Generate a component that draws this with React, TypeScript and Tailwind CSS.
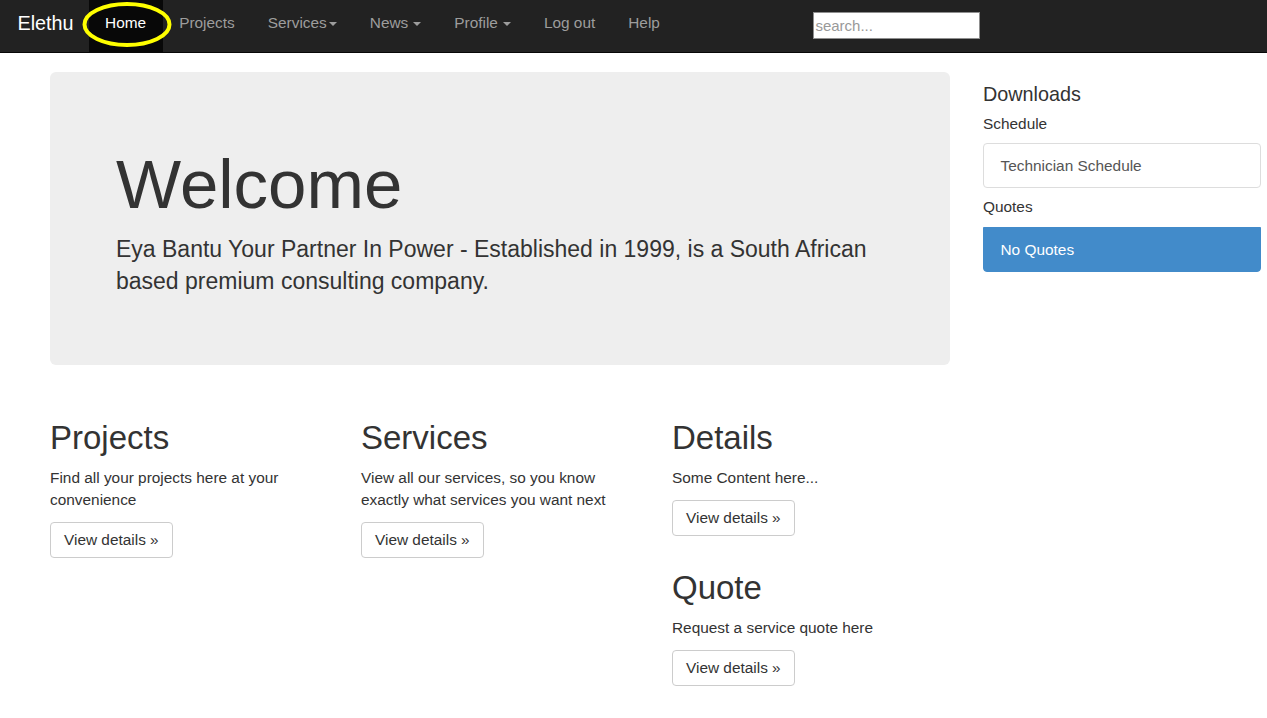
import React from 'react';

const NAV_ITEMS = [
  { label: 'Home', active: true },
  { label: 'Projects' },
  { label: 'Services', caret: 'tight' },
  { label: 'News', caret: 'spaced' },
  { label: 'Profile', caret: 'spaced' },
  { label: 'Log out' },
  { label: 'Help' },
];

const COLUMNS = [
  {
    title: 'Projects',
    text: 'Find all your projects here at your convenience',
  },
  {
    title: 'Services',
    text: 'View all our services, so you know exactly what services you want next',
  },
];

function Caret({ spaced }: { spaced?: boolean }) {
  return (
    <span
      className={`inline-block w-0 h-0 align-middle border-t-[4px] border-x-[4px] border-t-current border-x-transparent ${
        spaced ? 'ml-[5px]' : 'ml-[2px]'
      }`}
    />
  );
}

function DetailsButton() {
  return (
    <button className="mt-[11px] h-[36px] px-[13px] border border-[#ccc] rounded-[4px] bg-white text-[#333] text-[15.4px] leading-[22px]">
      View details &raquo;
    </button>
  );
}

function Block({ title, text, className = '' }: { title: string; text: string; className?: string }) {
  return (
    <div className={className}>
      <h2 className="text-[33px] leading-[36px] text-[#333]">{title}</h2>
      <p className="mt-[11px]">{text}</p>
      <DetailsButton />
    </div>
  );
}

export default function App() {
  return (
    <div className="min-h-screen bg-white text-[#333] text-[15.4px] leading-[22px] font-['Liberation_Sans',Arial,sans-serif]">
      {/* Navbar */}
      <nav className="relative h-[53px] bg-[#222] border-b border-[#080808] flex items-stretch">
        <a className="pt-[12px] pl-[17.5px] pr-[15px] text-[19.8px] leading-[22px] text-white">Elethu</a>
        <ul className="flex">
          {NAV_ITEMS.map((item) => (
            <li
              key={item.label}
              className={`pt-[12px] px-[16.5px] whitespace-nowrap ${
                item.active ? 'bg-[#080808] text-white' : 'text-[#9d9d9d]'
              }`}
            >
              {item.label}
              {item.caret && <Caret spaced={item.caret === 'spaced'} />}
            </li>
          ))}
        </ul>
        <div className="ml-[137px] pt-[12px]">
          <input
            type="text"
            placeholder="search..."
            className="w-[167px] h-[27px] bg-white border border-[#8f8f8f] pl-[1px] text-[15px] text-[#333] placeholder:text-[#999] outline-none"
          />
        </div>
        {/* highlight annotation */}
        <svg className="absolute left-0 top-0 pointer-events-none" width="200" height="53">
          <ellipse cx="127" cy="24.5" rx="42.5" ry="20.5" fill="none" stroke="#ffff00" strokeWidth="4" />
        </svg>
      </nav>

      <div className="flex pl-[50px] gap-[33px]">
        {/* Main column */}
        <main className="w-[900px]">
          <div className="mt-[19px] rounded-[6px] bg-[#eee] pt-[75px] pb-[68px] px-[66px]">
            <h1 className="text-[69px] leading-[76px] text-[#333]">Welcome</h1>
            <p className="mt-[10px] text-[23px] leading-[32px]">
              Eya Bantu Your Partner In Power - Established in 1999, is a South African based premium
              consulting company.
            </p>
          </div>

          <div className="grid grid-cols-3 gap-x-[33px] mt-[55px]">
            {COLUMNS.map((col) => (
              <Block key={col.title} title={col.title} text={col.text} />
            ))}
            <div>
              <Block title="Details" text="Some Content here..." />
              <Block className="mt-[34px]" title="Quote" text="Request a service quote here" />
            </div>
          </div>
        </main>

        {/* Sidebar */}
        <aside className="w-[278px] pt-[30px]">
          <h4 className="text-[19.8px] leading-[22px]">Downloads</h4>
          <div className="mt-[8px]">Schedule</div>
          <div className="mt-[8px] h-[45px] flex items-center pl-[16.5px] border border-[#ddd] rounded-[4px] text-[#555]">
            Technician Schedule
          </div>
          <div className="mt-[8px]">Quotes</div>
          <div className="mt-[9px] h-[45px] flex items-center pl-[16.5px] bg-[#428bca] border border-[#428bca] rounded-b-[4px] text-white">
            No Quotes
          </div>
        </aside>
      </div>
    </div>
  );
}
